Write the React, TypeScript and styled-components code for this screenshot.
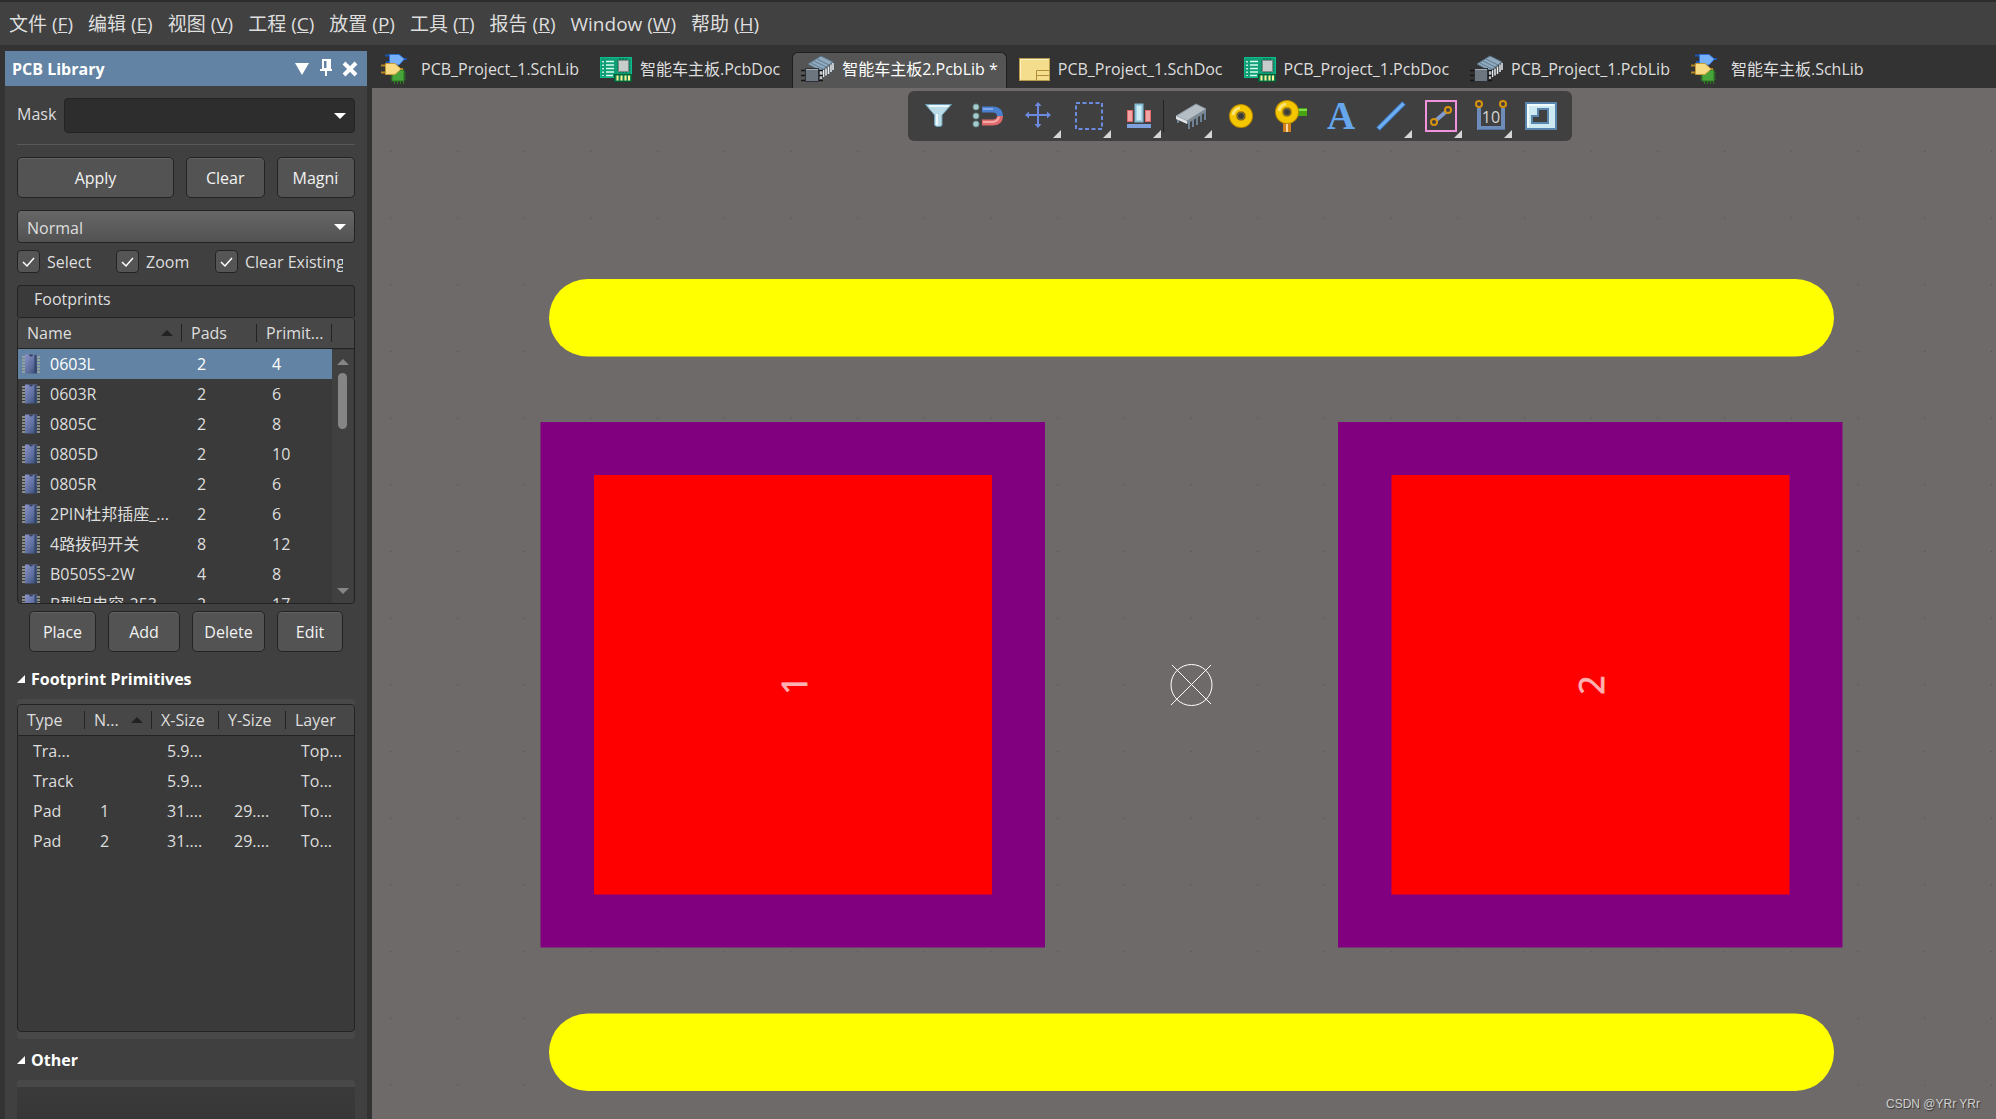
import React, { useState } from "react";
import styled, { createGlobalStyle, css } from "styled-components";

const font = `"Open Sans", "Noto Sans", "Noto Sans CJK SC", sans-serif`;
const c = {
  frame: "#333333",
  panel: "#404040",
  bar: "#414141",
  list: "#3a3a3a",
  header: "#474747",
  edge: "#232323",
  accent: "#6283a3",
  text: "#dedede",
  canvas: "#6e6a69",
};

const Global = createGlobalStyle`
  *, *::before, *::after { box-sizing: border-box; }
  body { margin: 0; background: ${c.frame}; color: ${c.text}; font: 16px/24px ${font}; }
  button, select, input { font: inherit; color: inherit; margin: 0; }
`;

const Shell = styled.div`
  display: grid;
  grid-template-rows: 45px minmax(0, 1fr);
  height: 100vh;
  overflow: hidden;
`;

const MenuBar = styled.nav`
  display: flex;
  align-items: center;
  gap: 15px;
  padding: 1px 9px 0;
  background: ${c.bar};
  border-top: 2px solid #2c2c2c;
`;

const MenuItem = styled.button`
  padding: 0;
  border: 0;
  background: none;
  font-size: 19px;
  white-space: nowrap;
`;

const Workspace = styled.div`
  display: grid;
  grid-template-columns: 372px minmax(0, 1fr);
  min-height: 0;
`;

/* ---------- side panel ---------- */

const Side = styled.aside`
  padding: 6px 5px 0;
  min-height: 0;
  overflow: hidden;
`;

const TitleBar = styled.header`
  display: flex;
  align-items: center;
  gap: 8px;
  height: 35px;
  padding: 0 9px 0 7px;
  background: ${c.accent};
  color: #fff;
`;

const Title = styled.h1`
  flex: 1;
  margin: 0;
  font-size: 16px;
  font-weight: 700;
`;

const TitleButton = styled.button`
  display: grid;
  place-items: center;
  width: 16px;
  height: 24px;
  padding: 0;
  border: 0;
  background: none;
`;

const PanelBody = styled.div`
  display: flex;
  flex-direction: column;
  padding: 12px 12px 0;
  height: 100%;
  background: ${c.panel};
`;

const MaskRow = styled.div`
  display: flex;
  align-items: center;
  gap: 8px;
  padding-bottom: 11px;
  border-bottom: 1px solid #585858;
  margin-bottom: 12px;
`;

const MaskLabel = styled.label`
  padding-bottom: 3px;
`;

const Picker = styled.div<{ $grow?: boolean }>`
  display: grid;
  flex: ${(p) => (p.$grow ? "1" : "none")};
  align-items: center;
  & > * { grid-area: 1 / 1; }
  & > svg { justify-self: end; margin-right: 9px; pointer-events: none; }
`;

const Select = styled.select<{ $dark?: boolean }>`
  appearance: none;
  width: 100%;
  height: ${(p) => (p.$dark ? 35 : 33)}px;
  padding: 2px 9px 0;
  border: 1px solid ${c.edge};
  border-radius: 4px;
  background: ${(p) => (p.$dark ? "#2d2d2d" : "linear-gradient(#666, #525252)")};
`;

const ButtonRow = styled.div<{ $columns: string; $inset?: boolean }>`
  display: grid;
  grid-template-columns: ${(p) => p.$columns};
  gap: 12px;
  padding: ${(p) => (p.$inset ? "0 12px" : "0")};
`;

const Button = styled.button`
  height: 41px;
  min-width: 0;
  padding: 0 8px;
  border: 1px solid ${c.edge};
  border-radius: 5px;
  background: #535353;
  box-shadow: inset 0 1px #636363;
  color: #f2f2f2;
`;

const Clip = styled.span`
  display: block;
  margin: 0 7px;
  overflow: hidden;
  white-space: nowrap;
`;

const Checks = styled.div`
  display: grid;
  grid-template-columns: 99px 99px minmax(0, 1fr);
  margin: 7px 12px 12px 0;
`;

const CheckLabel = styled.label`
  display: flex;
  align-items: center;
  gap: 7px;
  height: 23px;
  overflow: hidden;
  white-space: nowrap;
`;

const CheckBox = styled.span`
  display: grid;
  flex: none;
  & > * { grid-area: 1 / 1; }
  & > svg { pointer-events: none; visibility: hidden; }
  & > input:checked + svg { visibility: visible; }
`;

const Tick = styled.input`
  appearance: none;
  width: 23px;
  height: 23px;
  border: 1px solid ${c.edge};
  border-radius: 4px;
  background: #555;
`;

const GroupTitle = styled.h2`
  margin: 0;
  height: 32px;
  padding: 1px 16px;
  border: 1px solid ${c.edge};
  border-bottom: 0;
  border-radius: 4px 4px 0 0;
  background: ${c.list};
  font-size: 16px;
  font-weight: 400;
`;

const ListFrame = styled.div<{ $rows: number }>`
  position: relative;
  flex: none;
  height: ${(p) => p.$rows}px;
  border: 1px solid ${c.edge};
  border-radius: 4px;
  background: ${c.list};
  overflow: hidden;
`;

const Table = styled.table`
  width: 100%;
  table-layout: fixed;
  border-collapse: separate;
  border-spacing: 0;
`;

const Th = styled.th<{ $width?: number }>`
  height: 31px;
  padding: 0;
  width: ${(p) => (p.$width ? `${p.$width}px` : "auto")};
  background: ${c.header};
  border-bottom: 1px solid ${c.edge};
  font-weight: 400;
  text-align: left;
`;

const HeadCell = styled.span<{ $last?: boolean }>`
  display: flex;
  align-items: center;
  justify-content: space-between;
  height: 18px;
  padding: 0 8px 0 9px;
  line-height: 18px;
  white-space: nowrap;
  border-right: ${(p) => (p.$last ? "0" : `1px solid ${c.edge}`)};
`;

const Row = styled.tr<{ $active?: boolean }>`
  ${(p) => p.$active && css`
    color: #fff;
    & > td:not(:last-child) { background: ${c.accent}; }
  `}
`;

const Td = styled.td<{ $icon?: boolean }>`
  height: 30px;
  padding: 0 0 0 ${(p) => (p.$icon ? 3 : 15)}px;
  white-space: nowrap;
`;

const NameCell = styled.span`
  display: flex;
  align-items: center;
  gap: 10px;
  line-height: 24px;
`;

const Scrollbar = styled.div`
  position: absolute;
  top: 32px;
  right: 1px;
  bottom: 0;
  width: 21px;
  display: flex;
  flex-direction: column;
  align-items: center;
  padding: 9px 0;
  background: #404040;
`;

const Thumb = styled.div`
  width: 9px;
  height: 56px;
  margin: 8px 0 auto;
  border-radius: 5px;
  background: #858585;
`;

const Section = styled.h2`
  display: flex;
  align-items: center;
  gap: 6px;
  height: 24px;
  margin: 0;
  font-size: 16px;
  font-weight: 700;
  color: #fff;
`;

const Gutter = styled.div`
  flex: none;
  padding: 5px 0 7px;
  margin: 8px 0 9px;
  border-radius: 4px;
  background: #484848;
`;

const OtherBox = styled.div`
  flex: 1;
  margin-top: 8px;
  border-top: 7px solid #484848;
  border-radius: 4px 4px 0 0;
  background: linear-gradient(#3b3b3b, #333 60px);
`;

const Spacer = styled.div<{ $h: number }>`
  flex: none;
  height: ${(p) => p.$h}px;
`;

/* ---------- documents ---------- */

const Main = styled.main`
  display: grid;
  grid-template-rows: 43px minmax(0, 1fr);
  min-width: 0;
`;

const Tabs = styled.div`
  display: flex;
  align-items: flex-end;
  gap: 3px;
  overflow: hidden;
`;

const Tab = styled.button<{ $active?: boolean }>`
  display: flex;
  align-items: center;
  gap: 8px;
  flex: none;
  height: 36px;
  padding: 0 8px 3px;
  border: 1px solid ${(p) => (p.$active ? "#1f1f1f" : "transparent")};
  border-bottom: 0;
  border-radius: 6px 6px 0 0;
  background: ${(p) => (p.$active ? "#555" : "none")};
  color: ${(p) => (p.$active ? "#fff" : c.text)};
  white-space: nowrap;
`;

const Canvas = styled.section`
  position: relative;
  background: ${c.canvas};
  overflow: hidden;
`;

const Board = styled.svg`
  display: block;
  width: 100%;
  height: 100%;
`;

const Toolbar = styled.div`
  position: absolute;
  top: 3px;
  left: 33%;
  display: flex;
  height: 50px;
  padding: 0 8px 0 5px;
  border-radius: 6px;
  background: #404040;
`;

const Tool = styled.button`
  width: 50px;
  height: 50px;
  padding: 0;
  border: 0;
  background: none;
  & > svg { display: block; }
`;

const ToolRule = styled.span`
  width: 1px;
  height: 32px;
  margin-top: 9px;
  background: #222;
`;

const Watermark = styled.span`
  position: absolute;
  right: 16px;
  bottom: 7px;
  font: 12px/16px "Liberation Sans", Arial, sans-serif;
  color: #d0d0d0;
  text-shadow: 1px 1px 1px #333;
`;

/* ---------- glyphs ---------- */

const Caret = () => (
  <svg width="12" height="6" aria-hidden="true"><path d="M0 0H12L6 6Z" fill="#fff" /></svg>
);
const SortMark = ({ up = true, fill = "#222" }: { up?: boolean; fill?: string }) => (
  <svg width="12" height="6" aria-hidden="true"><path d={up ? "M0 6H12L6 0Z" : "M0 0H12L6 6Z"} fill={fill} /></svg>
);
const Fold = () => (
  <svg width="8" height="8" aria-hidden="true"><path d="M0 8H8V0Z" fill="#fff" /></svg>
);

const ChipMark = () => (
  <svg width="19" height="20" aria-hidden="true">
    <defs>
      <linearGradient id="chipFill" x1="0" y1="0" x2="1" y2="1">
        <stop offset="0" stopColor="#8d93c8" /><stop offset="0.6" stopColor="#5b6c9c" /><stop offset="1" stopColor="#34466b" />
      </linearGradient>
    </defs>
    {[3, 6, 9, 12, 15, 18].map((y) => (
      <path key={y} d={`M1 ${y}H5M15 ${y}H19`} stroke="#a3aaa0" strokeWidth="1.4" />
    ))}
    <rect x="4" y="0.5" width="12" height="19" fill="url(#chipFill)" />
    <path d="M14.5 1V19" stroke="#32456a" strokeWidth="2" />
    <path d="M8 0.5a2 2 0 0 0 4 0Z" fill="#34405e" />
  </svg>
);

const SchLibIcon = () => (
  <svg width="32" height="32" viewBox="0 0 32 32" aria-hidden="true">
    <g stroke="#2f7d22" strokeWidth="1"><path d="M9.5 20H25M9.5 23H25M9.5 26H25M13.5 18V31M16.500 18V31M19.500 18V31M22.500 18V31" /></g>
    <rect x="11" y="17" width="12" height="11" fill="#46a43a" stroke="#2b7a22" />
    <path d="M4 2.500H9M23 6H26M5 9H9" stroke="#1c55b0" strokeWidth="2" />
    <path d="M8.500 1.500H18L23.500 6L18 12H8.500Z" fill="#76b0f8" stroke="#2f6fd0" />
    <path d="M0 12.500H5M0 19.500H5M18 16H22" stroke="#b58520" strokeWidth="2" />
    <path d="M4.500 10.500H14L20 16L14 21.500H4.500Z" fill="#f6da84" stroke="#c69a38" />
  </svg>
);

const PcbDocIcon = () => (
  <svg width="32" height="26" viewBox="0 0 32 26" aria-hidden="true">
    <rect x="0.500" y="1.500" width="31" height="20" fill="#0f9e76" stroke="#0bbd8c" />
    <path d="M3 5V20" stroke="#fff" strokeWidth="1.500" strokeDasharray="1.500 2" />
    <path d="M6 5.500H14M6 9H14M6 12.500H14M6 16H14M6 19.500H13" stroke="#d9fff0" strokeWidth="1.500" />
    <path d="M17 5H30M17 8H30M17 11H30M17 14H30M20 2V17M23 2V17M26 2V17" stroke="#065b43" />
    <rect x="18.500" y="4.500" width="10" height="11" fill="#c7cdca" stroke="#7f8b86" />
    <rect x="14.500" y="18.500" width="17" height="7" fill="#0c7f4a" stroke="#045c34" />
    <path d="M17.500 19.500V24.500M21.500 19.500V24.500M25.500 19.500V24.500M29 19.500V24.500" stroke="#fff59a" strokeWidth="2" />
  </svg>
);

const PcbLibIcon = () => (
  <svg width="33" height="28" viewBox="0 0 33 28" aria-hidden="true">
    <path d="M7 9L20 1L32 7L20 16Z" fill="#8fa9bd" stroke="#5c7488" />
    <path d="M10 8L22 14M13 6L25 12M16 4L28 10" stroke="#5f7b92" />
    <path d="M20 16V24M22.500 15V22M25 13.500V20.500M27.500 11.500V19M30 9.500V17M32 8V15" stroke="#e4ecf2" strokeWidth="1.500" />
    <path d="M0 15.500H22M0 20.500H22M0 25.500H22" stroke="#151515" strokeWidth="1.500" />
    <rect x="4.500" y="13.500" width="13" height="13" fill="#6d757e" stroke="#2d3238" />
    <path d="M5 14.500H17" stroke="#a2abb4" />
  </svg>
);

const SchDocIcon = () => (
  <svg width="31" height="23" viewBox="0 0 31 23" aria-hidden="true">
    <rect x="0.500" y="0.500" width="30" height="22" fill="#f4de8e" stroke="#b89b4c" />
    <path d="M17.500 22V12.500H30M17.500 17.500H30" fill="none" stroke="#b08d38" />
    <path d="M1.500 21V1.500H29" fill="none" stroke="#fff2c0" />
  </svg>
);

const icons = { schlib: SchLibIcon, pcbdoc: PcbDocIcon, pcblib: PcbLibIcon, schdoc: SchDocIcon };

const Ring = ({ x, y }: { x: number; y: number }) => (
  <>
    <circle cx={x} cy={y} r="8" fill="none" stroke="#b98a00" strokeWidth="8" />
    <circle cx={x} cy={y} r="8" fill="none" stroke="#f3c600" strokeWidth="6" />
    <path d={`M${x - 8} ${y - 1}A8 8 0 0 1 ${x - 1} ${y - 8}`} fill="none" stroke="#fbe47a" strokeWidth="3" />
    <circle cx={x} cy={y} r="3.500" fill="#3b3b3b" stroke="#8b7a2a" />
  </>
);
const Node = ({ x, y }: { x: number; y: number }) => (
  <circle cx={x} cy={y} r="3" fill="#404040" stroke="#d8930e" strokeWidth="2" />
);

const tools: { name: string; more?: boolean; rule?: boolean; art: React.ReactNode }[] = [
  {
    name: "Filter",
    art: (
      <>
        <path d="M12.500 13.500H38.500L29 24V34.500L27 35.500H23L21.500 34V24Z" fill="#b9dce6" stroke="#6f9fb8" />
        <path d="M16 15H36" stroke="#e9f6fa" strokeWidth="2" />
        <path d="M24 23V34" stroke="#effafc" strokeWidth="2" />
      </>
    ),
  },
  {
    name: "Snapping",
    art: (
      <>
        {[16, 25, 33].map((y) => <circle key={y} cx="13" cy={y} r="3" fill="#a8cccc" stroke="#6d9494" />)}
        <path d="M19 18.500H30Q37 19 37 25" fill="none" stroke="#4a7fd0" strokeWidth="6" />
        <path d="M37 25Q37 31 30 31.500H19" fill="none" stroke="#e06a6c" strokeWidth="6" />
        <path d="M20 31H30Q35 30 36 26" fill="none" stroke="#f4a9a9" strokeWidth="2" />
        <path d="M20 18H30" stroke="#7fa8ea" strokeWidth="2" />
      </>
    ),
  },
  {
    name: "Move",
    more: true,
    art: (
      <>
        <path d="M13 24H37M25 12V36" stroke="#6c8be0" strokeWidth="2" />
        <path d="M12 24L16 20.500V27.500ZM38 24L34 20.500V27.500ZM25 11L21.500 15H28.500ZM25 37L21.500 33H28.500Z" fill="#6c8be0" />
      </>
    ),
  },
  {
    name: "Select area",
    more: true,
    art: <rect x="13" y="12" width="26" height="26" fill="none" stroke="#6c8be0" strokeWidth="2" strokeDasharray="4 2.500" />,
  },
  {
    name: "Align",
    more: true,
    art: (
      <>
        <rect x="14.500" y="19.500" width="5" height="11" fill="#f2a3a3" stroke="#e06a6c" />
        <rect x="32.500" y="19.500" width="5" height="11" fill="#f2a3a3" stroke="#e06a6c" />
        <rect x="22.500" y="13.500" width="7" height="17" fill="#c9ecf5" stroke="#86bcd4" strokeWidth="2" />
        <rect x="14" y="33" width="24" height="4" fill="#7ea0dc" />
      </>
    ),
  },
  {
    name: "Place component",
    more: true,
    rule: true,
    art: (
      <>
        <path d="M14 27V32M25 30V38M29 28V36M33 25V34M37 22V31M41 19V29" stroke="#6e8296" strokeWidth="2" />
        <path d="M12 25L32 13L42 18L23 30Z" fill="#b4bcc4" stroke="#8b96a1" />
        <path d="M12 25L23 30V33L12 28Z" fill="#dfe3e6" />
        <path d="M23 30L42 18V21L23 33Z" fill="#7e8a96" />
      </>
    ),
  },
  { name: "Place pad", art: <Ring x={27} y={25} /> },
  {
    name: "Place via",
    art: (
      <>
        <rect x="33" y="17" width="10" height="8" fill="#46a312" />
        <path d="M33 19H43" stroke="#86dd4c" strokeWidth="2" />
        <rect x="19" y="31" width="8" height="10" fill="#d17f1c" />
        <path d="M23 31V41" stroke="#ffd5a0" strokeWidth="2" />
        <Ring x={23} y={21} />
      </>
    ),
  },
  {
    name: "Place string",
    art: <text x="27" y="38" textAnchor="middle" fontFamily="Liberation Serif, serif" fontWeight="700" fontSize="39" fill="#66a6ec">A</text>,
  },
  {
    name: "Place line",
    more: true,
    art: (
      <>
        <path d="M14 38L40 12" stroke="#3d79c4" strokeWidth="5" />
        <path d="M14.500 37.500L39.500 12.500" stroke="#6fb0f2" strokeWidth="3" />
      </>
    ),
  },
  {
    name: "Route",
    more: true,
    art: (
      <>
        <rect x="12" y="10" width="30" height="30" fill="none" stroke="#f093dc" strokeWidth="2" />
        <path d="M20 31L34 19" stroke="#7f9ccc" strokeWidth="4" />
        <Node x={20} y={31} /><Node x={34} y={19} />
      </>
    ),
  },
  {
    name: "Place dimension",
    more: true,
    art: (
      <>
        <path d="M15 17V37H39V17" fill="none" stroke="#6d8cba" strokeWidth="4" />
        <path d="M14 38.500H41" stroke="#5475a8" />
        <Node x={15} y={13} /><Node x={39} y={13} />
        <text x="27" y="32" textAnchor="middle" fontFamily="Open Sans, sans-serif" fontSize="16" fill="#d6d6d6">10</text>
      </>
    ),
  },
  {
    name: "Place polygon",
    art: (
      <>
        <rect x="12" y="12" width="30" height="26" fill="#cdeaf2" stroke="#5a86ae" strokeWidth="2" />
        <path d="M18 32V25H24V18H34V32Z" fill="#404040" stroke="#5a86ae" strokeWidth="2" />
        <path d="M14 36V14H40" fill="none" stroke="#f0fbfd" strokeWidth="2" />
      </>
    ),
  },
];

/* ---------- data ---------- */

const menus = [["文件", "F"], ["编辑", "E"], ["视图", "V"], ["工程", "C"], ["放置", "P"], ["工具", "T"], ["报告", "R"], ["Window", "W"], ["帮助", "H"]];

const docs: { icon: keyof typeof icons; name: string }[] = [
  { icon: "schlib", name: "PCB_Project_1.SchLib" },
  { icon: "pcbdoc", name: "智能车主板.PcbDoc" },
  { icon: "pcblib", name: "智能车主板2.PcbLib *" },
  { icon: "schdoc", name: "PCB_Project_1.SchDoc" },
  { icon: "pcbdoc", name: "PCB_Project_1.PcbDoc" },
  { icon: "pcblib", name: "PCB_Project_1.PcbLib" },
  { icon: "schlib", name: "智能车主板.SchLib" },
];

const footprints = [
  ["0603L", 2, 4], ["0603R", 2, 6], ["0805C", 2, 8], ["0805D", 2, 10], ["0805R", 2, 6],
  ["2PIN杜邦插座_...", 2, 6], ["4路拨码开关", 8, 12], ["B0505S-2W", 4, 8], ["B型铝电容-253", 2, 17],
] as const;

const primitives = [
  ["Tra...", "", "5.9...", "", "Top..."],
  ["Track", "", "5.9...", "", "To..."],
  ["Pad", "1", "31....", "29....", "To..."],
  ["Pad", "2", "31....", "29....", "To..."],
];

function Check({ id, label }: { id: string; label: string }) {
  return (
    <CheckLabel htmlFor={id}>
      <CheckBox>
        <Tick type="checkbox" id={id} defaultChecked />
        <svg width="23" height="23" aria-hidden="true"><path d="M6 12L10 16L17 8" fill="none" stroke="#fff" strokeWidth="1.500" /></svg>
      </CheckBox>
      {label}
    </CheckLabel>
  );
}

function Library() {
  const [active, setActive] = useState(0);
  return (
    <Side>
      <TitleBar>
        <Title>PCB Library</Title>
        <TitleButton aria-label="Panel menu"><svg width="14" height="12"><path d="M0 0H14L7 12Z" fill="#fff" /></svg></TitleButton>
        <TitleButton aria-label="Pin">
          <svg width="12" height="22"><path d="M3 2H10V11H3Z" fill="none" stroke="#fff" strokeWidth="2" /><path d="M8 2V11" stroke="#fff" strokeWidth="3" /><path d="M0 12H12M6 12V18" stroke="#fff" strokeWidth="2" /></svg>
        </TitleButton>
        <TitleButton aria-label="Close"><svg width="16" height="16"><path d="M2 2L14 14M14 2L2 14" stroke="#fff" strokeWidth="4" /></svg></TitleButton>
      </TitleBar>
      <PanelBody>
        <MaskRow>
          <MaskLabel htmlFor="mask">Mask</MaskLabel>
          <Picker $grow><Select id="mask" $dark><option aria-label="No mask" /></Select><Caret /></Picker>
        </MaskRow>
        <ButtonRow $columns="2fr 1fr 1fr">
          <Button>Apply</Button>
          <Button>Clear</Button>
          <Button><Clip>Magnify</Clip></Button>
        </ButtonRow>
        <Spacer $h={12} />
        <Picker>
          <Select aria-label="Highlight mode"><option>Normal</option></Select><Caret />
        </Picker>
        <Checks>
          <Check id="select" label="Select" />
          <Check id="zoom" label="Zoom" />
          <Check id="clear" label="Clear Existing" />
        </Checks>
        <GroupTitle>Footprints</GroupTitle>
        <ListFrame $rows={287}>
          <Table>
            <thead>
              <tr>
                <Th $width={164}><HeadCell>Name<SortMark /></HeadCell></Th>
                <Th $width={75}><HeadCell>Pads</HeadCell></Th>
                <Th $width={75}><HeadCell>Primit...</HeadCell></Th>
                <Th aria-label="Scroll" />
              </tr>
            </thead>
            <tbody>
              {footprints.map(([name, pads, count], i) => (
                <Row key={name} $active={i === active} onClick={() => setActive(i)}>
                  <Td $icon><NameCell><ChipMark />{name}</NameCell></Td>
                  <Td>{pads}</Td>
                  <Td>{count}</Td>
                  <Td />
                </Row>
              ))}
            </tbody>
          </Table>
          <Scrollbar aria-hidden="true">
            <SortMark fill="#858585" />
            <Thumb />
            <SortMark up={false} fill="#858585" />
          </Scrollbar>
        </ListFrame>
        <Spacer $h={7} />
        <ButtonRow $columns="67fr 72fr 73fr 66fr" $inset>
          <Button>Place</Button>
          <Button>Add</Button>
          <Button>Delete</Button>
          <Button>Edit</Button>
        </ButtonRow>
        <Spacer $h={15} />
        <Section><Fold />Footprint Primitives</Section>
        <Gutter>
          <ListFrame $rows={328}>
            <Table>
              <thead>
                <tr>
                  <Th $width={67}><HeadCell>Type</HeadCell></Th>
                  <Th $width={67}><HeadCell>N...<SortMark /></HeadCell></Th>
                  <Th $width={67}><HeadCell>X-Size</HeadCell></Th>
                  <Th $width={67}><HeadCell>Y-Size</HeadCell></Th>
                  <Th><HeadCell $last>Layer</HeadCell></Th>
                </tr>
              </thead>
              <tbody>
                {primitives.map((row, i) => (
                  <Row key={i}>{row.map((cell, j) => <Td key={j}>{cell}</Td>)}</Row>
                ))}
              </tbody>
            </Table>
          </ListFrame>
        </Gutter>
        <Section><Fold />Other</Section>
        <OtherBox />
      </PanelBody>
    </Side>
  );
}

const Footprint = () => (
  <Board viewBox="0 0 1624 1031" role="img" aria-label="Footprint with two pads">
    <defs>
      <pattern id="grid" x="785.700" y="563.500" width="66.700" height="66.700" patternUnits="userSpaceOnUse">
        <rect x="33" y="33" width="1" height="1" fill="#4a474c" />
      </pattern>
    </defs>
    <rect width="1624" height="1031" fill="url(#grid)" />
    <g fill="#ff0">
      <rect x="177" y="191" width="1285" height="77.500" rx="38.700" />
      <rect x="177" y="925.500" width="1285" height="77.500" rx="38.700" />
    </g>
    <g fill="#800080">
      <rect x="168.500" y="334" width="504.500" height="525.500" />
      <rect x="966" y="334" width="504.500" height="525.500" />
    </g>
    <g fill="#f00">
      <rect x="222" y="387" width="398" height="419.500" />
      <rect x="1019.500" y="387" width="398" height="419.500" />
    </g>
    <g fill="#ffb0b0" stroke="#ffb0b0" strokeWidth="0.800" fontFamily="Open Sans, sans-serif" fontSize="34" textAnchor="middle">
      <text transform="translate(435 597) rotate(-90)">1</text>
      <text transform="translate(1232 597) rotate(-90)">2</text>
    </g>
    <g fill="none" stroke="#fff" strokeWidth="1">
      <circle cx="819.500" cy="597" r="20.500" />
      <path d="M800 577L839 616M839 577L799 617" />
    </g>
  </Board>
);

export default function App() {
  return (
    <Shell>
      <Global />
      <MenuBar>
        {menus.map(([name, key]) => (
          <MenuItem key={key}>{name} (<u>{key}</u>)</MenuItem>
        ))}
      </MenuBar>
      <Workspace>
        <Library />
        <Main>
          <Tabs>
            {docs.map((d, i) => {
              const Icon = icons[d.icon];
              return <Tab key={d.name} $active={i === 2}><Icon />{d.name}</Tab>;
            })}
          </Tabs>
          <Canvas>
            <Footprint />
            <Toolbar role="toolbar" aria-label="Placement">
              {tools.map((t) => (
                <React.Fragment key={t.name}>
                  {t.rule && <ToolRule />}
                  <Tool aria-label={t.name}>
                    <svg width="50" height="50" aria-hidden="true">
                      {t.art}
                      {t.more && <path d="M40 47H48V39Z" fill="#d6d6d6" />}
                    </svg>
                  </Tool>
                </React.Fragment>
              ))}
            </Toolbar>
            <Watermark>CSDN @YRr YRr</Watermark>
          </Canvas>
        </Main>
      </Workspace>
    </Shell>
  );
}
